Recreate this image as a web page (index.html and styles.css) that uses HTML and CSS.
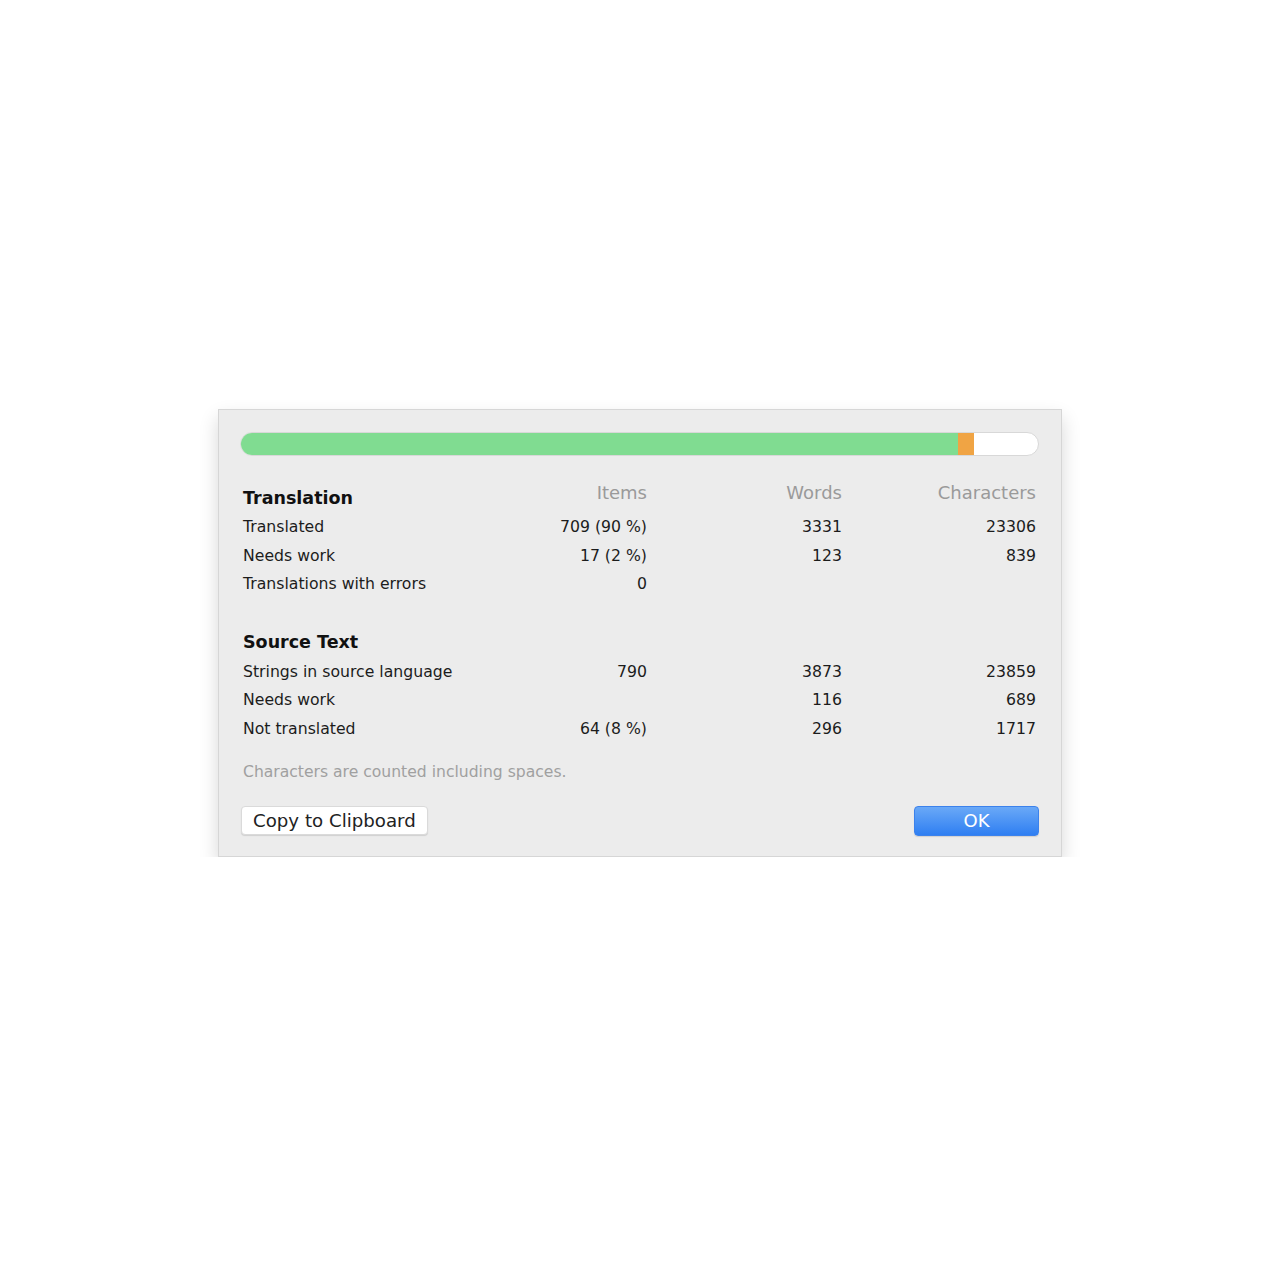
FILE: index.html
```html
<!DOCTYPE html>
<html lang="en">
<head>
<meta charset="utf-8">
<title>Statistics</title>
<link rel="stylesheet" href="styles.css">
</head>
<body>
<div class="page">
  <div class="dialog">
    <div class="bar">
      <div class="seg green" style="width:90%"></div>
      <div class="seg orange" style="width:2%"></div>
    </div>
    <div class="stats">
      <div class="h">Translation</div><div class="col">Items</div><div class="col">Words</div><div class="col">Characters</div>
      <div class="l">Translated</div><div class="n">709 (90 %)</div><div class="n">3331</div><div class="n">23306</div>
      <div class="l">Needs work</div><div class="n">17 (2 %)</div><div class="n">123</div><div class="n">839</div>
      <div class="l">Translations with errors</div><div class="n">0</div><div class="n"></div><div class="n"></div>
      <div class="spacer"></div>
      <div class="h h2">Source Text</div><div class="n"></div><div class="n"></div><div class="n"></div>
      <div class="l">Strings in source language</div><div class="n">790</div><div class="n">3873</div><div class="n">23859</div>
      <div class="l">Needs work</div><div class="n"></div><div class="n">116</div><div class="n">689</div>
      <div class="l">Not translated</div><div class="n">64 (8 %)</div><div class="n">296</div><div class="n">1717</div>
    </div>
    <p class="note">Characters are counted including spaces.</p>
    <div class="footer">
      <button class="btn">Copy to Clipboard</button>
      <button class="btn primary">OK</button>
    </div>
  </div>
</div>
</body>
</html>
```
FILE: styles.css
```css
html, body { margin: 0; padding: 0; background: #fff; }
body { font-family: "DejaVu Sans", "Liberation Sans", sans-serif; color: #1e1e1e; }
.page { padding-top: 409px; padding-left: 218px; }
.dialog {
  width: 844px;
  height: 448px;
  box-sizing: border-box;
  background: #ececec;
  border: 1px solid #d6d6d6;
  box-shadow: 0 9px 18px rgba(0,0,0,0.16);
  padding: 22px 21px 0 21px;
}
.bar {
  height: 24px;
  box-sizing: border-box;
  background: #fff;
  border: 1px solid #d8d8d8;
  border-radius: 12px;
  overflow: hidden;
  display: flex;
  width: 799px;
}
.seg { height: 100%; }
.green { background: #80dc91; }
.orange { background: #f0a444; }
.stats {
  margin: 27px 3px 0 3px;
  display: grid;
  grid-template-columns: 209px 195px 195px 194px;
  grid-template-rows: 29.5px 28.5px 28.5px 28.5px 28px 31px 28.5px 28.5px 28.5px;
  align-items: center;
  font-size: 15.7px;
}
.h { font-weight: bold; font-size: 17.5px; color: #111; padding-top: 1px; }
.h2 { padding-top: 0; }
.col { text-align: right; color: #9a9a9a; font-size: 18px; padding-bottom: 10px; }
.l { white-space: nowrap; color: #1c1c1c; }
.n { text-align: right; color: #1c1c1c; }
.spacer { grid-column: 1 / -1; }
.note { margin: 20px 3px 0 3px; font-size: 15.6px; color: #a0a0a0; }
.footer {
  margin-top: 25px;
  display: flex;
  justify-content: space-between;
  align-items: center;
  width: 799px;
}
.btn {
  font-family: "DejaVu Sans", "Liberation Sans", sans-serif;
  font-size: 18.2px;
  height: 29px;
  padding: 0 11px;
  margin-left: 1px;
  background: #fff;
  border: 1px solid #dadada;
  border-radius: 4px;
  color: #222;
  box-shadow: 0 1px 1px rgba(0,0,0,0.12);
}
.primary {
  width: 125px;
  height: 30px;
  margin-left: 0;
  font-size: 18px;
  color: #fff;
  border: 1px solid #3c82ec;
  background: linear-gradient(#6aa9f7, #2f7ff2);
}
```
